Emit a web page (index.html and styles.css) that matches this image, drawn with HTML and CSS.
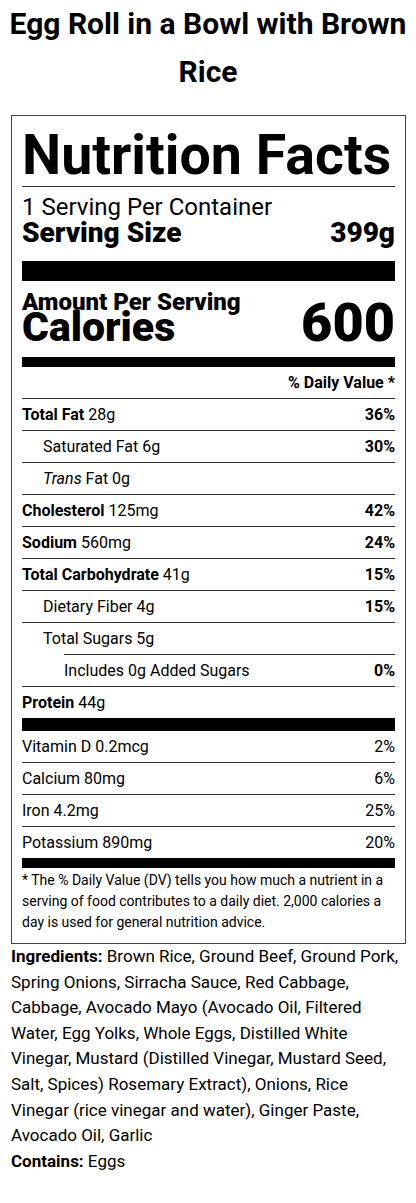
FILE: index.html
```html
<!DOCTYPE html>
<html lang="en">
<head>
<meta charset="UTF-8">
<meta name="viewport" content="width=device-width, initial-scale=1.0">
<title>Egg Roll in a Bowl with Brown Rice</title>
<link rel="stylesheet" href="styles.css">
</head>
<body>

<h1>Egg Roll in a Bowl with Brown Rice</h1>

<div class="label">
    <h2 class="label-title">Nutrition Facts</h2>

    <div class="servings">
        <div class="per-container">1 Serving Per Container</div>
        <div class="serving-size">
            <span>Serving Size</span>
            <span>399g</span>
        </div>
    </div>

    <div class="bar bar-thick"></div>

    <div class="calories">
        <div>
            <div class="amount">Amount Per Serving</div>
            <div class="calories-label">Calories</div>
        </div>
        <div class="calories-value">600</div>
    </div>

    <div class="bar bar-medium"></div>

    <div class="row dv-head"><b>% Daily Value *</b></div>

    <!-- Main nutrients -->
    <div class="row"><span><b>Total Fat</b> 28g</span><b>36%</b></div>
    <div class="row sub"><span>Saturated Fat 6g</span><b>30%</b></div>
    <div class="row sub"><span><i>Trans</i> Fat 0g</span></div>
    <div class="row"><span><b>Cholesterol</b> 125mg</span><b>42%</b></div>
    <div class="row"><span><b>Sodium</b> 560mg</span><b>24%</b></div>
    <div class="row"><span><b>Total Carbohydrate</b> 41g</span><b>15%</b></div>
    <div class="row sub"><span>Dietary Fiber 4g</span><b>15%</b></div>
    <div class="row sub no-line"><span>Total Sugars 5g</span></div>
    <div class="row added">
        <div class="added-inner"><span>Includes 0g Added Sugars</span><b>0%</b></div>
    </div>
    <div class="row no-line"><span><b>Protein</b> 44g</span></div>

    <div class="bar bar-protein"></div>

    <!-- Vitamins and minerals -->
    <div class="row"><span>Vitamin D 0.2mcg</span><span>2%</span></div>
    <div class="row"><span>Calcium 80mg</span><span>6%</span></div>
    <div class="row"><span>Iron 4.2mg</span><span>25%</span></div>
    <div class="row no-line"><span>Potassium 890mg</span><span>20%</span></div>

    <div class="bar bar-medium"></div>

    <p class="footnote">* The % Daily Value (DV) tells you how much a nutrient in a serving of food contributes to a daily diet. 2,000 calories a day is used for general nutrition advice.</p>
</div>

<p class="ingredients"><b>Ingredients:</b> Brown Rice, Ground Beef, Ground Pork, Spring Onions, Sirracha Sauce, Red Cabbage, Cabbage, Avocado Mayo (Avocado Oil, Filtered Water, Egg Yolks, Whole Eggs, Distilled White Vinegar, Mustard (Distilled Vinegar, Mustard Seed, Salt, Spices) Rosemary Extract), Onions, Rice Vinegar (rice vinegar and water), Ginger Paste, Avocado Oil, Garlic</p>
<p class="ingredients"><b>Contains:</b> Eggs</p>

</body>
</html>
```

FILE: styles.css
```css
/* Basic reset */
* {
    box-sizing: border-box;
}

body {
    font-family: Roboto, "Noto Sans", sans-serif;
    font-size: 16px;
    line-height: 1.6;
    color: #000;
    margin: 0 10px 0 11px;
    background-color: #fff;
}

/* Recipe title */
h1 {
    font-size: 30px;
    font-weight: 700;
    line-height: 48px;
    text-align: center;
    margin: 0 -10px 19px -11px;
}

/* Label box */
.label {
    border: 1px solid #444;
    padding: 10px;
}

.label-title {
    font-size: 55.5px;
    font-weight: 700;
    line-height: 60px;
    white-space: nowrap;
    margin: 0;
    border-bottom: 1px solid #333;
}

.servings {
    padding: 8px 0 15px;
}

.per-container {
    font-size: 24px;
    line-height: 25px;
}

.serving-size {
    display: flex;
    justify-content: space-between;
    font-size: 28px;
    line-height: 26px;
    font-weight: 900;
}

/* Black bars */
.bar {
    background-color: #000;
}

.bar-thick {
    height: 20px;
}

.bar-medium {
    height: 10px;
}

.bar-protein {
    height: 13px;
}

/* Calories block */
.calories {
    display: flex;
    justify-content: space-between;
    align-items: flex-end;
    padding: 9px 0 16px;
    font-weight: 900;
}

.amount {
    font-size: 24px;
    line-height: 24px;
}

.calories-label {
    font-size: 41px;
    line-height: 27px;
}

.calories-value {
    font-size: 54px;
    line-height: 37px;
}

/* Nutrient rows */
.row {
    display: flex;
    justify-content: space-between;
    padding: 3px 0;
    line-height: 25px;
    border-bottom: 1px solid #333;
}

.row b {
    font-weight: 700;
}

.dv-head {
    justify-content: flex-end;
}

.row.sub {
    padding-left: 21px;
}

.row.no-line {
    border-bottom: none;
}

.row.added {
    display: block;
    padding: 0 0 0 42px;
}

.added-inner {
    display: flex;
    justify-content: space-between;
    border-top: 1px solid #333;
    padding: 3px 0;
}

/* Footnote */
.footnote {
    font-size: 14px;
    line-height: 21px;
    margin: 0;
    padding-top: 2px;
}

/* Ingredients */
.ingredients {
    margin: 0;
    font-size: 17px;
    line-height: 25.6px;
}
```
